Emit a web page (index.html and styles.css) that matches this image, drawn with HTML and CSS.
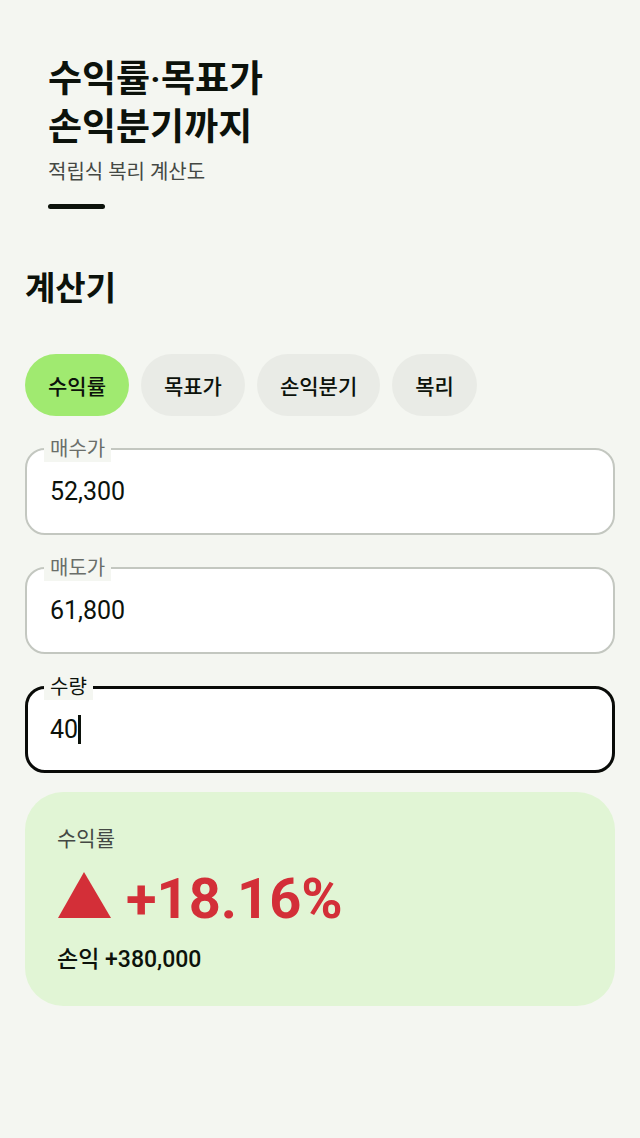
FILE: index.html
```html
<!DOCTYPE html>
<html lang="ko">
<head>
  <meta charset="UTF-8" />
  <title>계산기</title>
  <meta name="viewport" content="width=device-width, initial-scale=1.0"/>
  <link rel="stylesheet" href="styles.css">
</head>
<body>

<header class="hero">
  <h1>수익률·목표가<br>손익분기까지</h1>
  <p>적립식 복리 계산도</p>
  <div class="hero-line"></div>
</header>

<main class="calculator">
  <h2>계산기</h2>

  <div class="tabs">
    <button type="button" class="tab active">수익률</button>
    <button type="button" class="tab">목표가</button>
    <button type="button" class="tab">손익분기</button>
    <button type="button" class="tab">복리</button>
  </div>

  <form class="fields">
    <div class="field">
      <label for="buyPrice">매수가</label>
      <input type="text" id="buyPrice" inputmode="numeric" value="52,300" />
    </div>
    <div class="field">
      <label for="sellPrice">매도가</label>
      <input type="text" id="sellPrice" inputmode="numeric" value="61,800" />
    </div>
    <div class="field focused">
      <label for="quantity">수량</label>
      <input type="text" id="quantity" inputmode="numeric" value="40" />
      <span class="caret"></span>
    </div>
  </form>

  <section class="result">
    <div class="result-label">수익률</div>
    <div class="result-value">
      <svg class="arrow-up" viewBox="0 0 54 46" aria-hidden="true">
        <path d="M27 0L54 46H1Z" />
      </svg>
      <span>+18.16%</span>
    </div>
    <div class="result-profit">손익 +380,000</div>
  </section>
</main>

</body>
</html>
```

FILE: styles.css
```css
:root {
  --bg: #f4f6f1;
  --ink: #0c120b;
  --muted: #444844;
  --green: #a0ea70;
  --green-light: #e1f5d5;
  --red: #d32f38;
  --border: #c3c7c0;
}

* {
  box-sizing: border-box;
}

body {
  margin: 0;
  font-family: Roboto, "Noto Sans CJK KR", sans-serif;
  background: var(--bg);
  color: var(--ink);
}

h1, h2, p {
  margin: 0;
}

.hero {
  padding: 56px 48px 0;
}

.hero h1 {
  font-size: 37px;
  line-height: 48px;
  font-weight: 600;
}

.hero p {
  margin-top: 6px;
  font-size: 20px;
  line-height: 28px;
  color: var(--muted);
}

.hero-line {
  width: 57px;
  height: 5px;
  margin-top: 18px;
  border-radius: 3px;
  background: var(--ink);
}

.calculator {
  padding: 56px 25px 48px;
}

.calculator h2 {
  font-size: 33px;
  line-height: 48px;
  font-weight: 600;
}

.tabs {
  display: flex;
  flex-wrap: wrap;
  gap: 12px;
  margin-top: 41px;
}

.tab {
  height: 62px;
  padding: 0 23px;
  border: none;
  border-radius: 31px;
  background: #e9ebe6;
  color: var(--ink);
  font-family: inherit;
  font-size: 21px;
  font-weight: 500;
  cursor: pointer;
}

.tab.active {
  background: var(--green);
}

.fields {
  display: grid;
  gap: 32px;
  margin-top: 32px;
}

.field {
  position: relative;
}

/* label sits on the top border of the box */
.field label {
  position: absolute;
  top: -12px;
  left: 19px;
  padding: 0 6px;
  background: var(--bg);
  color: #6a6e69;
  font-size: 20px;
  line-height: 26px;
}

.field input {
  display: block;
  width: 100%;
  height: 87px;
  padding: 0 23px;
  border: 2px solid var(--border);
  border-radius: 20px;
  outline: none;
  background: #fff;
  color: var(--ink);
  font-family: inherit;
  font-size: 25px;
}

.field.focused label {
  color: var(--ink);
}

.field.focused input {
  padding: 0 22px;
  border: 3px solid #090b08;
}

.caret {
  position: absolute;
  top: 29px;
  left: 53px;
  width: 3px;
  height: 29px;
  background: var(--ink);
}

.result {
  margin-top: 19px;
  padding: 32px 32px 30px;
  border-radius: 38px;
  background: var(--green-light);
}

.result-label {
  color: var(--muted);
  font-size: 21px;
  line-height: 30px;
}

.result-value {
  display: flex;
  align-items: baseline;
  gap: 15px;
  margin-top: 9px;
  color: var(--red);
  font-size: 56px;
  line-height: 72px;
  font-weight: 700;
}

.arrow-up {
  width: 54px;
  height: 46px;
  fill: currentColor;
}

.result-profit {
  margin-top: 9px;
  font-size: 23px;
  line-height: 32px;
  font-weight: 500;
}
```
